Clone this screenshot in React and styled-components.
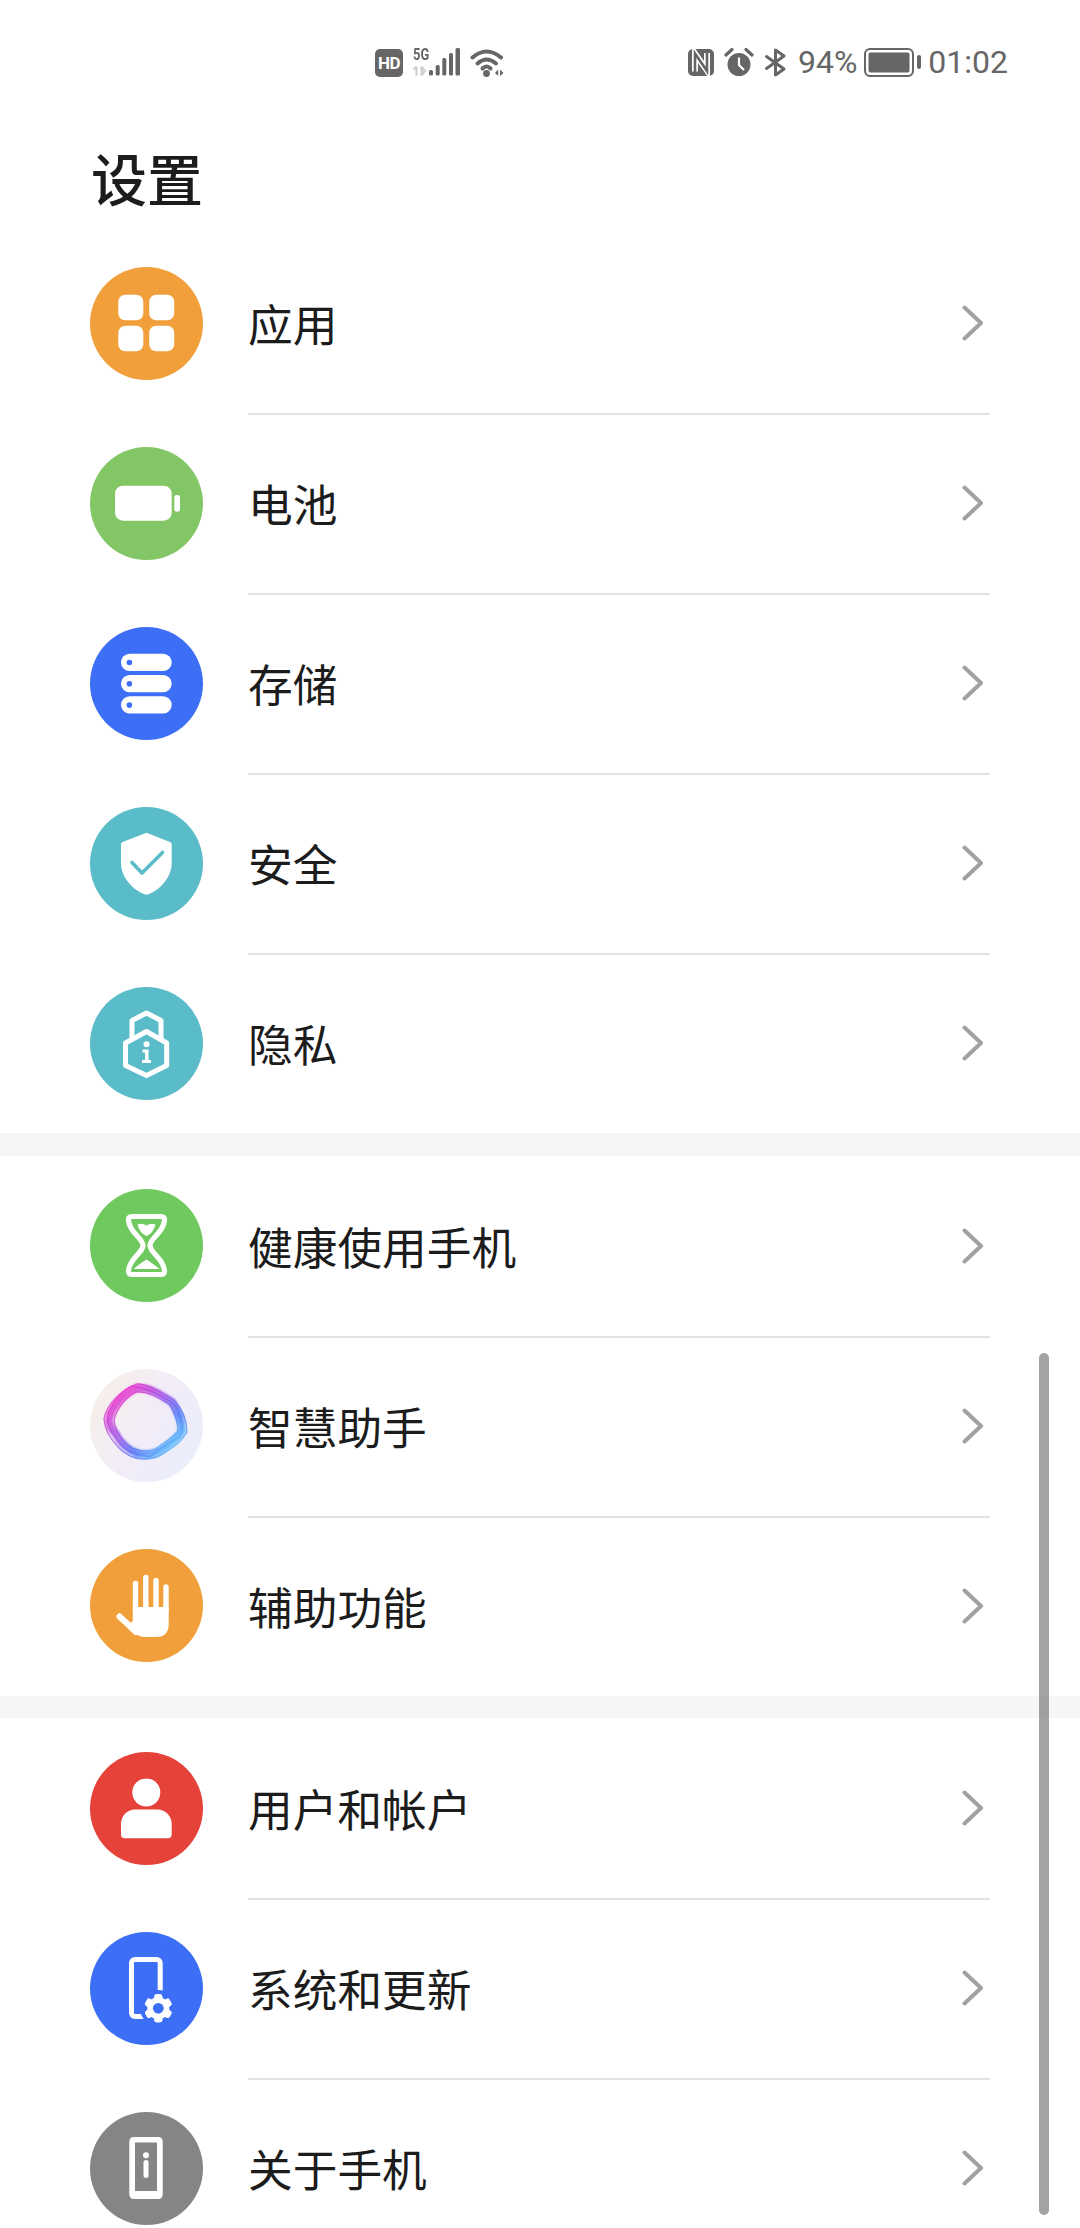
import React from 'react'
import styled, { createGlobalStyle } from 'styled-components'

const GlobalStyle = createGlobalStyle`
    html, body {
        margin: 0;
        padding: 0;
        background: #fff;
    }
    body {
        font-family: "Noto Sans CJK SC", "Noto Sans", sans-serif;
    }
`

const colors = {
    orange: '#f19f3b',
    green: '#82c665',
    blue: '#3c6ff5',
    teal: '#5abcc9',
    lime: '#6fc95f',
    red: '#e5423a',
    gray: '#858585',
    status: '#666666'
}

const Page = styled.div`
    position: relative;
    width: 1080px;
    height: 2228px;
    overflow: hidden;
    background: #fff;
`
const StatusBar = styled.div`
    display: flex;
    justify-content: space-between;
    align-items: flex-start;
    box-sizing: border-box;
    height: 90px;
    padding: 48px 72px 0 375px;
`
const StatusGroup = styled.div`
    display: flex;
    align-items: center;
    gap: 10px;
    height: 29px;
`
const HdBadge = styled.div`
    display: flex;
    align-items: center;
    justify-content: center;
    width: 28px;
    height: 28px;
    border-radius: 5px;
    background: ${colors.status};
    color: #fff;
    font-family: "Roboto", sans-serif;
    font-size: 17px;
    font-weight: 700;
    letter-spacing: -0.5px;
`
const SignalBox = styled.div`
    position: relative;
    width: 47px;
    height: 29px;
`
const FiveG = styled.span`
    position: absolute;
    left: 0;
    top: -1px;
    color: ${colors.status};
    font-family: "Roboto", sans-serif;
    font-size: 17px;
    line-height: 14px;
    font-weight: 700;
    transform: scaleX(0.76);
    transform-origin: left center;
`
const StatusText = styled.span`
    color: ${colors.status};
    font-family: "Roboto", sans-serif;
    font-size: 32px;
    line-height: 29px;
`
const BatterySlot = styled.div`
    display: flex;
    margin: 0 -3px;
`
const Title = styled.h1`
    margin: 0;
    height: 143px;
    padding-left: 91px;
    padding-top: 49px;
    box-sizing: border-box;
    color: #1c1c1c;
    font-size: 56px;
    font-weight: 500;
    line-height: 76px;
`
const Group = styled.div`
    background: #fff;
`
const Band = styled.div`
    height: 22.5px;
    background: #f6f6f6;
`
const Row = styled.div`
    display: flex;
    align-items: center;
    height: 180px;
    padding-left: 90px;
`
const IconCircle = styled.div`
    flex: none;
    width: 113px;
    height: 113px;
    border-radius: 50%;
    background: ${p => p.$bg};
    & svg {
        display: block;
    }
`
const RowBody = styled.div`
    flex: none;
    align-self: flex-start;
    display: flex;
    align-items: center;
    justify-content: space-between;
    box-sizing: content-box;
    width: 736px;
    height: 180px;
    margin-left: 45px;
    padding-right: 6px;
    border-bottom: ${p => (p.$last ? 'none' : '2px solid #e2e2e2')};
`
const Label = styled.span`
    color: #1c1c1c;
    font-size: 44.7px;
    line-height: 60px;
`
const Scrollbar = styled.div`
    position: absolute;
    left: 1039px;
    top: 1353px;
    width: 10px;
    height: 862px;
    border-radius: 5px;
    background: rgba(120, 120, 120, 0.68);
`

const Svg113 = ({ children }) => (
    <svg width="113" height="113" viewBox="0 0 113 113">{children}</svg>
)

const AppsIcon = () => (
    <Svg113>
        <g fill="#fff">
            <rect x="28.3" y="27.7" width="25" height="25.6" rx="7" />
            <rect x="59.2" y="27.7" width="25" height="25.6" rx="7" />
            <rect x="28.3" y="58.7" width="25" height="25.6" rx="7" />
            <rect x="59.2" y="58.7" width="25" height="25.6" rx="7" />
        </g>
    </Svg113>
)
const BatteryIcon = () => (
    <Svg113>
        <rect x="25" y="38.7" width="56.7" height="35" rx="8" fill="#fff" />
        <rect x="84.3" y="48" width="5.7" height="16.7" rx="2.6" fill="#fff" />
    </Svg113>
)
const StorageIcon = ({ bg }) => (
    <Svg113>
        {[26.7, 48, 69.3].map(y => (
            <g key={y}>
                <rect x="31" y={y} width="50.7" height="17.3" rx="8.6" fill="#fff" />
                <circle cx="39.4" cy={y + 8.8} r="2.8" fill={bg} />
            </g>
        ))}
    </Svg113>
)
const ShieldIcon = ({ bg }) => (
    <Svg113>
        <path d="M56.5 25.7 L80 35 Q81.7 35.8 81.7 37.6 V56 C81.7 71 69 83.5 58.3 87.3 Q56.5 88 54.7 87.3 C44 83.5 31 71 31 56 V37.6 Q31 35.8 32.7 35 Z" fill="#fff" />
        <path d="M42 55.5 L52 66 L72.5 45.5" fill="none" stroke={bg} strokeWidth="3.6" strokeLinecap="round" strokeLinejoin="round" />
    </Svg113>
)
const PrivacyIcon = () => (
    <Svg113>
        <g fill="none" stroke="#fff" strokeLinejoin="round">
            <path d="M56.5 44.5 L76.7 56 V78.5 L56.5 88.5 L35.5 78.5 V56 Z" strokeWidth="5" />
            <path d="M42 52 V33.5 L56.5 26 L71 33.5 V52" strokeWidth="5" />
        </g>
        <circle cx="56.5" cy="57.3" r="3" fill="#fff" />
        <path d="M52.5 62.5 H58.5 V73 H61 V76 H52 V73 H55 V65.5 H52.5 Z" fill="#fff" />
    </Svg113>
)
const HourglassIcon = () => (
    <Svg113>
        <path d="M42 27.5 H71 Q75 27.5 74.5 31.5 C73.5 44 60 49 60 56.5 C60 64 73.5 69 74.5 81.5 Q75 85.5 71 85.5 H42 Q38 85.5 38.5 81.5 C39.5 69 53 64 53 56.5 C53 49 39.5 44 38.5 31.5 Q38 27.5 42 27.5 Z" fill="none" stroke="#fff" strokeWidth="5.2" strokeLinejoin="round" />
        <path d="M47.5 35.5 Q52 33.5 56.5 36.5 Q61 33.5 65.5 35.5 Q63.5 44 56.5 47 Q49.5 44 47.5 35.5 Z" fill="#fff" />
        <path d="M43.5 80 Q50 74.5 56.5 70.5 Q63 74.5 69.5 80 Z" fill="#fff" />
    </Svg113>
)
const AssistantIcon = () => (
    <Svg113>
        <defs>
            <linearGradient id="ringGrad" x1="0.12" y1="0.1" x2="0.88" y2="0.88">
                <stop offset="0" stopColor="#ee2fc8" />
                <stop offset="0.45" stopColor="#9a5cec" />
                <stop offset="0.72" stopColor="#4f72f4" />
                <stop offset="1" stopColor="#56bcfc" />
            </linearGradient>
            <filter id="ringBlur" x="-20%" y="-20%" width="140%" height="140%">
                <feGaussianBlur stdDeviation="1.3" />
            </filter>
        </defs>
        <g fill="none" stroke="url(#ringGrad)">
            <path d="M47 19 C60 18 71 26 82 33 C88 42 92 53 92 62 C87 71 78 76 71 81 C64 86 56 86 48 85 C39 81 30 74 26 65 C21 60 19 56 19 51 C21 38 34 24 47 19 Z" strokeWidth="8" opacity="0.82" filter="url(#ringBlur)" />
            <path d="M47 15 C60 15 72 24 84 31 C92 40 97 52 97 63 C92 72 84 78 77 82 C70 88 62 90 54 90 C44 90 36 86 29 79 C22 72 15 62 14 50 C16 36 32 20 47 15 Z" strokeWidth="1.3" opacity="0.8" />
            <path d="M46 23 C58 22 70 29 80 36 C85 45 88 54 88 62 C82 70 72 74 66 80 C58 83 50 82 42 79 C34 74 26 64 24 52 C26 40 36 28 46 23 Z" strokeWidth="1.3" opacity="0.8" />
            <path d="M42 17 C56 19 70 24 86 37 C90 46 95 56 90 68 C82 72 70 78 60 88 C48 86 38 84 30 74 C24 66 16 58 18 44 C24 32 32 22 42 17 Z" strokeWidth="1.3" opacity="0.8" />
        </g>
    </Svg113>
)
const HandIcon = () => (
    <Svg113>
        <g stroke="#fff" strokeWidth="5.4" strokeLinecap="round">
            <path d="M45.5 34.5 V62" />
            <path d="M55.8 28.5 V62" />
            <path d="M66 31.5 V62" />
            <path d="M76 38 V62" />
            <path d="M29.5 67.5 L46 83" strokeWidth="6" />
        </g>
        <path d="M42.8 58 H78.7 V75 Q78.7 88 66 88 H55 Q49 88 45 84 L38 76 L42.8 72 Z" fill="#fff" />
    </Svg113>
)
const UserIcon = () => (
    <Svg113>
        <circle cx="56.3" cy="40.5" r="14" fill="#fff" />
        <path d="M45 57.5 H67.5 C75.5 57.5 81.7 64 81.7 72 V82.5 Q81.7 86.2 78 86.2 H34.7 Q31 86.2 31 82.5 V72 C31 64 37 57.5 45 57.5 Z" fill="#fff" />
    </Svg113>
)
const SystemIcon = ({ bg }) => (
    <Svg113>
        <rect x="41.5" y="27.5" width="28.7" height="57" rx="3.5" fill="none" stroke="#fff" strokeWidth="5" />
        <circle cx="68.3" cy="76.3" r="18.2" fill={bg} />
        <g fill="#fff">
            {[0, 60, 120, 180, 240, 300].map(a => (
                <rect key={a} x="64.3" y="62.3" width="8" height="28" rx="2.4" transform={`rotate(${a} 68.3 76.3)`} />
            ))}
            <circle cx="68.3" cy="76.3" r="11" />
        </g>
        <circle cx="68.3" cy="76.3" r="5.4" fill={bg} />
    </Svg113>
)
const AboutIcon = () => (
    <Svg113>
        <path fillRule="evenodd" d="M44 25 H68 Q72.7 25 72.7 29.7 V82.3 Q72.7 87 68 87 H44 Q39.3 87 39.3 82.3 V29.7 Q39.3 25 44 25 Z M45 30.5 V79 H67 V30.5 Z" fill="#fff" />
        <circle cx="56" cy="43.3" r="3" fill="#fff" />
        <rect x="53.5" y="48" width="5" height="18" rx="2.5" fill="#fff" />
    </Svg113>
)

const Chevron = () => (
    <svg width="22" height="36" viewBox="0 0 22 36">
        <path d="M2.5 2.5 L19 18 L2.5 33.5" fill="none" stroke="#a1a1a1" strokeWidth="4" strokeLinecap="round" strokeLinejoin="round" />
    </svg>
)

const SignalIcon = () => (
    <svg width="47" height="29" viewBox="0 0 47 29" style={{ position: 'absolute', left: 0, top: 0 }}>
        <g fill="none" stroke="#d0d0d0" strokeWidth="2.2">
            <path d="M3.5 27.5 V18.5 M0.6 21.5 L3.5 18.5" />
            <path d="M8.5 18.5 V27.5 M8.5 18.5 L11.8 23 L8.5 27.5" />
        </g>
        <g fill={colors.status}>
            <rect x="16" y="22" width="4" height="5.5" rx="1.6" />
            <rect x="22.7" y="17" width="4" height="10.5" rx="1.6" />
            <rect x="29.3" y="10" width="4" height="17.5" rx="1.6" />
            <rect x="36" y="5" width="4" height="22.5" rx="1.6" />
            <rect x="42.5" y="0" width="4.5" height="27.5" rx="1.6" />
        </g>
    </svg>
)
const WifiIcon = () => (
    <svg width="35" height="29" viewBox="0 0 35 29">
        <g fill="none" stroke={colors.status} strokeWidth="4" strokeLinecap="round">
            <path d="M2.5 9.5 Q16.5 -2.5 31 9.5" />
            <path d="M7.5 15.5 Q16.5 7.5 26 15.5" />
            <path d="M12.5 20.5 Q16.5 16.5 20.5 20.5" />
        </g>
        <circle cx="16.5" cy="25.5" r="3.4" fill={colors.status} />
        <path d="M25 25 L28.2 21.5 V28 Z M30 21.5 L33.5 25 L30 28 Z" fill={colors.status} />
    </svg>
)
const NfcIcon = () => (
    <svg width="26" height="27" viewBox="0 0 26 27">
        <rect width="26" height="27" rx="5" fill={colors.status} />
        <path d="M7 22.5 V4.5 L19 21.5 V4" fill="none" stroke="#fff" strokeWidth="6" />
        <path d="M7 24 V4.5 L19 22 V3" fill="none" stroke={colors.status} strokeWidth="2.6" />
    </svg>
)
const AlarmIcon = () => (
    <svg width="30" height="29" viewBox="0 0 30 29">
        <circle cx="15" cy="16.5" r="11.5" fill={colors.status} />
        <path d="M15 9.5 V17 L20 22" fill="none" stroke="#fff" strokeWidth="2.2" />
        <path d="M2 7 L8 1.5 M28 7 L22 1.5" stroke={colors.status} strokeWidth="3.2" strokeLinecap="round" />
    </svg>
)
const BluetoothIcon = () => (
    <svg width="24" height="29" viewBox="0 0 24 29">
        <path d="M2.5 8.5 L20 21 L11.5 27 V2 L20 8 L2.5 20.5" fill="none" stroke={colors.status} strokeWidth="3" strokeLinejoin="round" strokeLinecap="round" />
    </svg>
)
const BatteryStatusIcon = () => (
    <svg width="57" height="29" viewBox="0 0 57 29">
        <rect x="1" y="1" width="48" height="27" rx="5" fill="none" stroke={colors.status} strokeWidth="2" />
        <rect x="4.5" y="4.5" width="41" height="20" rx="2" fill={colors.status} />
        <rect x="53" y="7" width="4" height="14" rx="2" fill={colors.status} />
    </svg>
)

const groups = [
    [
        { label: '应用', bg: colors.orange, Icon: AppsIcon },
        { label: '电池', bg: colors.green, Icon: BatteryIcon },
        { label: '存储', bg: colors.blue, Icon: StorageIcon },
        { label: '安全', bg: colors.teal, Icon: ShieldIcon },
        { label: '隐私', bg: colors.teal, Icon: PrivacyIcon }
    ],
    [
        { label: '健康使用手机', bg: colors.lime, Icon: HourglassIcon },
        { label: '智慧助手', bg: 'linear-gradient(120deg, #f8f0e6 0%, #f2ecf8 50%, #e8eefc 100%)', Icon: AssistantIcon },
        { label: '辅助功能', bg: colors.orange, Icon: HandIcon }
    ],
    [
        { label: '用户和帐户', bg: colors.red, Icon: UserIcon },
        { label: '系统和更新', bg: colors.blue, Icon: SystemIcon },
        { label: '关于手机', bg: colors.gray, Icon: AboutIcon }
    ]
]

function App() {
    return (
        <React.Fragment>
            <GlobalStyle />
            <Page>
                <StatusBar>
                    <StatusGroup>
                        <HdBadge>HD</HdBadge>
                        <SignalBox>
                            <SignalIcon />
                            <FiveG>5G</FiveG>
                        </SignalBox>
                        <WifiIcon />
                    </StatusGroup>
                    <StatusGroup>
                        <NfcIcon />
                        <AlarmIcon />
                        <BluetoothIcon />
                        <StatusText>94%</StatusText>
                        <BatterySlot>
                            <BatteryStatusIcon />
                        </BatterySlot>
                        <StatusText>01:02</StatusText>
                    </StatusGroup>
                </StatusBar>
                <Title>设置</Title>
                {groups.map((rows, g) => (
                    <React.Fragment key={g}>
                        {g > 0 && <Band />}
                        <Group>
                            {rows.map((item, i) => (
                                <Row key={item.label}>
                                    <IconCircle $bg={item.bg}>
                                        <item.Icon bg={item.bg} />
                                    </IconCircle>
                                    <RowBody $last={i === rows.length - 1}>
                                        <Label>{item.label}</Label>
                                        <Chevron />
                                    </RowBody>
                                </Row>
                            ))}
                        </Group>
                    </React.Fragment>
                ))}
                <Scrollbar />
            </Page>
        </React.Fragment>
    )
}

export default App
